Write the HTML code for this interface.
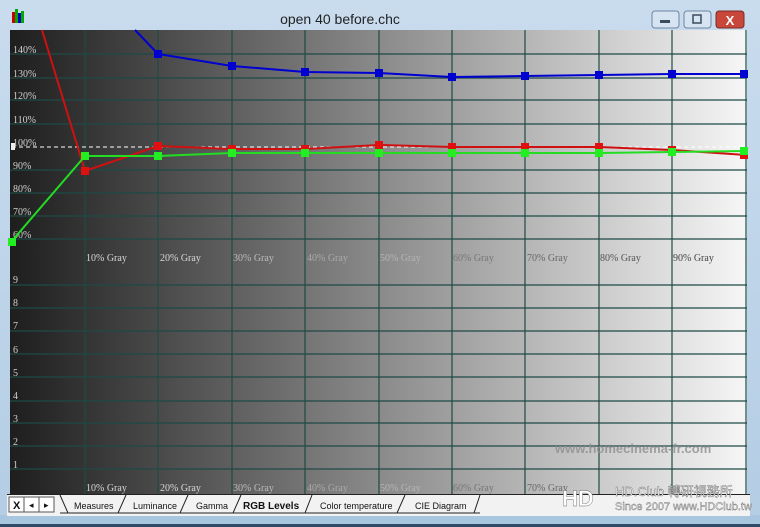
<!DOCTYPE html>
<html><head><meta charset="utf-8"><style>
html,body{margin:0;padding:0;width:760px;height:527px;overflow:hidden;background:#9fc3df;}
svg{display:block}
</style></head><body>
<svg width="760" height="527" viewBox="0 0 760 527" xmlns="http://www.w3.org/2000/svg" font-family="Liberation Serif, serif">
<defs>
<linearGradient id="bg" x1="0" x2="1" y1="0" y2="0">
<stop offset="0" stop-color="#1e1e1e"/><stop offset="0.5" stop-color="#8a8a8a"/><stop offset="1" stop-color="#f6f6f6"/>
</linearGradient>
<linearGradient id="tb" x1="0" x2="0" y1="0" y2="1">
<stop offset="0" stop-color="#c9dcee"/><stop offset="1" stop-color="#b4cde4"/>
</linearGradient>
</defs>
<rect x="0" y="0" width="760" height="527" fill="url(#tb)"/>
<rect x="0" y="515" width="760" height="12" fill="#a9c6e0"/>
<rect x="0" y="524" width="760" height="3" fill="#2e4a66"/>
<!-- icon -->
<rect x="12" y="12" width="3" height="11" fill="#c00"/><rect x="15" y="9" width="3" height="14" fill="#0a0"/><rect x="18" y="13" width="3" height="10" fill="#00c"/><rect x="21" y="11" width="3" height="12" fill="#0a0"/>
<text x="340" y="24" font-family="Liberation Sans, sans-serif" font-size="14" fill="#222" text-anchor="middle">open 40 before.chc</text>
<!-- window buttons -->
<rect x="652" y="11" width="27" height="17" rx="3" fill="#d6e3f0" stroke="#6c85a2"/><rect x="660" y="20" width="10" height="3" fill="#3a4a5e"/>
<rect x="684" y="11" width="27" height="17" rx="3" fill="#d6e3f0" stroke="#6c85a2"/><rect x="693" y="15" width="8" height="8" fill="none" stroke="#3a4a5e" stroke-width="1.5"/>
<rect x="716" y="11" width="28" height="17" rx="3" fill="#c9463a" stroke="#7a2a22"/><text x="730" y="25" font-family="Liberation Sans, sans-serif" font-size="13" font-weight="bold" fill="#fff" text-anchor="middle">X</text>
<!-- chart -->
<rect x="10" y="30" width="737" height="464" fill="url(#bg)"/>
<g stroke="#1e4a45" stroke-width="1.2">
<line x1="85" y1="30" x2="85" y2="494"/><line x1="158" y1="30" x2="158" y2="494"/><line x1="232" y1="30" x2="232" y2="494"/><line x1="305" y1="30" x2="305" y2="494"/><line x1="379" y1="30" x2="379" y2="494"/><line x1="452" y1="30" x2="452" y2="494"/><line x1="525" y1="30" x2="525" y2="494"/><line x1="599" y1="30" x2="599" y2="494"/><line x1="672" y1="30" x2="672" y2="494"/><line x1="746" y1="30" x2="746" y2="494"/>
<line x1="10" y1="54" x2="747" y2="54"/><line x1="10" y1="78" x2="747" y2="78"/><line x1="10" y1="100" x2="747" y2="100"/><line x1="10" y1="124" x2="747" y2="124"/><line x1="10" y1="170" x2="747" y2="170"/><line x1="10" y1="193" x2="747" y2="193"/><line x1="10" y1="216" x2="747" y2="216"/><line x1="10" y1="239" x2="747" y2="239"/>
<line x1="10" y1="285" x2="747" y2="285"/><line x1="10" y1="308" x2="747" y2="308"/><line x1="10" y1="331" x2="747" y2="331"/><line x1="10" y1="354" x2="747" y2="354"/><line x1="10" y1="377" x2="747" y2="377"/><line x1="10" y1="401" x2="747" y2="401"/><line x1="10" y1="423" x2="747" y2="423"/><line x1="10" y1="446" x2="747" y2="446"/><line x1="10" y1="469" x2="747" y2="469"/>
</g>
<line x1="12" y1="147" x2="747" y2="147" stroke="#fff" stroke-dasharray="4,3"/>
<rect x="11" y="143" width="4" height="7" fill="#eee"/>
<g font-size="10" fill="#cfcfcf">
<text x="13" y="53">140%</text><text x="13" y="77">130%</text><text x="13" y="99">120%</text><text x="13" y="123">110%</text><text x="13" y="146">100%</text><text x="13" y="169">90%</text><text x="13" y="192">80%</text><text x="13" y="215">70%</text><text x="13" y="238">60%</text>
<text x="13" y="283">9</text><text x="13" y="306">8</text><text x="13" y="329">7</text><text x="13" y="353">6</text><text x="13" y="376">5</text><text x="13" y="399">4</text><text x="13" y="422">3</text><text x="13" y="445">2</text><text x="13" y="468">1</text>
</g>
<g font-size="10" fill="#d8d8d8">
<text x="86" y="261">10% Gray</text><text x="160" y="261">20% Gray</text><text x="233" y="261" fill="#bbb">30% Gray</text><text x="307" y="261" fill="#aaa">40% Gray</text><text x="380" y="261" fill="#b5b5b5">50% Gray</text><text x="453" y="261" fill="#777">60% Gray</text><text x="527" y="261" fill="#666">70% Gray</text><text x="600" y="261" fill="#555">80% Gray</text><text x="673" y="261" fill="#444">90% Gray</text>
<text x="86" y="491">10% Gray</text><text x="160" y="491">20% Gray</text><text x="233" y="491" fill="#bbb">30% Gray</text><text x="307" y="491" fill="#aaa">40% Gray</text><text x="380" y="491" fill="#b5b5b5">50% Gray</text><text x="453" y="491" fill="#777">60% Gray</text><text x="527" y="491" fill="#666">70% Gray</text>
</g>
<text x="555" y="453" font-family="Liberation Sans, sans-serif" font-size="13" font-weight="bold" fill="#8f8f8f" opacity="0.8">www.homecinema-fr.com</text>
<!-- data -->
<polyline fill="none" stroke="#0000d0" stroke-width="2" points="135,30 158,54 232,66 305,72 379,73 452,77 525,76 599,75 672,74 746,74"/>
<polyline fill="none" stroke="#d01010" stroke-width="2" points="42,30 85,171 158,146 232,149 305,149 379,145 452,147 525,147 599,147 672,150 746,155"/>
<polyline fill="none" stroke="#22dd22" stroke-width="2" points="11,242 85,156 158,156 232,153 305,153 379,153 452,153 525,153 599,153 672,152 746,151"/>
<g fill="#0000d0"><rect x="154" y="50" width="8" height="8"/><rect x="228" y="62" width="8" height="8"/><rect x="301" y="68" width="8" height="8"/><rect x="375" y="69" width="8" height="8"/><rect x="448" y="73" width="8" height="8"/><rect x="521" y="72" width="8" height="8"/><rect x="595" y="71" width="8" height="8"/><rect x="668" y="70" width="8" height="8"/><rect x="740" y="70" width="8" height="8"/></g>
<g fill="#e01010"><rect x="81" y="167" width="8" height="8"/><rect x="154" y="142" width="8" height="8"/><rect x="228" y="145" width="8" height="8"/><rect x="301" y="145" width="8" height="8"/><rect x="375" y="141" width="8" height="8"/><rect x="448" y="143" width="8" height="8"/><rect x="521" y="143" width="8" height="8"/><rect x="595" y="143" width="8" height="8"/><rect x="668" y="146" width="8" height="8"/><rect x="740" y="151" width="8" height="8"/></g>
<g fill="#22ee22"><rect x="8" y="238" width="8" height="8"/><rect x="81" y="152" width="8" height="8"/><rect x="154" y="152" width="8" height="8"/><rect x="228" y="149" width="8" height="8"/><rect x="301" y="149" width="8" height="8"/><rect x="375" y="149" width="8" height="8"/><rect x="448" y="149" width="8" height="8"/><rect x="521" y="149" width="8" height="8"/><rect x="595" y="149" width="8" height="8"/><rect x="668" y="148" width="8" height="8"/><rect x="740" y="147" width="8" height="8"/></g>
<!-- tab bar -->
<rect x="7" y="494" width="743" height="22" fill="#f2f2f2"/>
<line x1="7" y1="494.5" x2="750" y2="494.5" stroke="#222"/>
<g font-family="Liberation Sans, sans-serif" font-size="9" fill="#111">
<rect x="9" y="497" width="15" height="15" fill="#fff" stroke="#555"/><text x="13" y="509" font-size="11" font-weight="bold">X</text>
<rect x="24" y="497" width="15" height="15" fill="#fff" stroke="#555"/><text x="29" y="508" font-size="9">◂</text>
<rect x="39" y="497" width="15" height="15" fill="#fff" stroke="#555"/><text x="44" y="508" font-size="9">▸</text>
<path d="M60 495 L68 513 M118 513 L126 495 M180 513 L188 495 M233 513 L241 495 M305 513 L312 495 M397 513 L405 495 M474 513 L480 495" stroke="#222" fill="none"/>
<line x1="60" y1="513" x2="480" y2="513" stroke="#222"/>
<text x="74" y="509">Measures</text><text x="133" y="509">Luminance</text><text x="196" y="509">Gamma</text>
<text x="243" y="509" font-weight="bold" font-size="10">RGB Levels</text>
<text x="320" y="509">Color temperature</text><text x="415" y="509">CIE Diagram</text>
</g>
<!-- watermark -->
<g font-family="Liberation Sans, sans-serif" fill="#fff" stroke="#666" stroke-width="0.4">
<text x="562" y="506" font-size="22" font-weight="bold">HD</text>
<text x="615" y="496" font-size="13">HD.Club 轉研視務所</text>
<text x="615" y="510" font-size="11">Since 2007 www.HDClub.tw</text>
</g>
</svg>
</body></html>
